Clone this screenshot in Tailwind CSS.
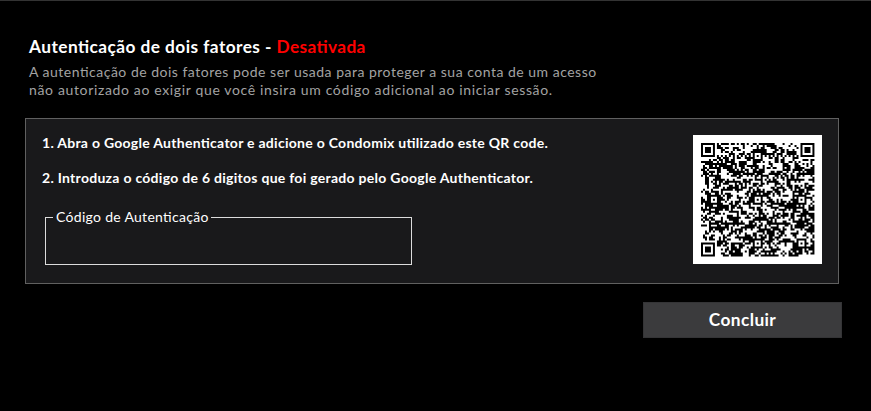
<!DOCTYPE html>
<html lang="pt">
<head>
<meta charset="utf-8">
<title>Autenticação de dois fatores</title>
<script src="https://cdn.jsdelivr.net/npm/@tailwindcss/browser@4"></script>
</head>
<body class="w-[871px] h-[411px] overflow-hidden bg-black border-t border-[#333333] pl-[25px] font-['Lato',sans-serif] text-white whitespace-nowrap [font-feature-settings:'liga'_1]">
<header class="pt-[35px] pl-[4px] h-[117px]">
<h1 class="text-[17.3px] leading-[22px] font-bold"><span class="tracking-[0.44px]">Autenticação de dois fatores - </span><span class="text-[#ff0000] tracking-[0.36px]">Desativada</span></h1>
<p class="mt-[5px] text-[14px] leading-[18px] text-[#a3a3a3]"><span class="tracking-[0.5px]">A autenticação de dois fatores pode ser usada para proteger a sua conta de um acesso</span><br><span class="tracking-[0.65px]">não autorizado ao exigir que você insira um código adicional ao iniciar sessão.</span></p>
</header>
<main class="w-[814px] h-[166px] bg-[#19191b] border border-[#606060] flex justify-between pl-[16px] pr-[16px] pt-[16px]">
<div>
<ol class="-mt-px text-[14px] leading-[17px] font-bold flex flex-col gap-[18px]">
<li class="tracking-[0.28px]">1. Abra o Google Authenticator e adicione o Condomix utilizado este QR code.</li>
<li class="tracking-[0.28px]">2. Introduza o código de 6 digitos que foi gerado pelo Google Authenticator.</li>
</ol>
<fieldset class="mt-[22px] ml-[3px] w-[367px] h-[57px] border border-[#dcdcdc] pl-[7px]">
<legend class="pl-[3px] pr-[2px] text-[14px] leading-[18px] tracking-[0.3px]">Código de Autenticação</legend>
<input aria-label="Código" class="w-[350px] h-[32px] bg-transparent outline-none">
</fieldset>
</div>
<svg class="w-[129px] h-[129px] bg-white" viewBox="0 0 129 129" role="img" aria-label="QR code"><path id="qr" transform="translate(8 8) scale(1.99)" fill="#000"/></svg>
</main>
<button class="mt-[18px] ml-[618px] w-[199px] h-[36px] bg-[#3b3b3d] border border-[#343436] flex items-center justify-center font-bold text-[17.3px] tracking-[0.4px]">Concluir</button>
<script>
const N = 57, centers = [6, 28, 50];
let seed = 73129, d = '';
const rnd = () => (seed = (seed * 1103515245 + 12345) % 2147483648) / 2147483648;
const grid = Array.from({ length: N }, () => Array(N).fill(false));
function moduleAt(x, y) {
  for (const [fx, fy] of [[0, 0], [N - 7, 0], [0, N - 7]]) {
    const r = Math.max(Math.abs(x - fx - 3), Math.abs(y - fy - 3));
    if (r <= 4) return r !== 2 && r !== 4;
  }
  for (const cx of centers) for (const cy of centers) {
    if ((cx === 6 && cy !== 28) || (cy === 6 && cx !== 28)) continue;
    const r = Math.max(Math.abs(x - cx), Math.abs(y - cy));
    if (r <= 2) return r !== 1;
  }
  if (x === 6) return y % 2 === 0;
  if (y === 6) return x % 2 === 0;
  const near = (x && grid[y][x - 1] ? 1 : 0) + (y && grid[y - 1][x] ? 1 : 0);
  return rnd() < [0.4, 0.53, 0.64][near];
}
for (let y = 0; y < N; y++) for (let x = 0; x < N; x++) grid[y][x] = moduleAt(x, y);
grid.forEach((row, y) => {
  for (let x = 0; x < N; x++) {
    if (!row[x]) continue;
    const start = x;
    while (row[x + 1]) x++;
    d += `M${start} ${y}h${x - start + 1}v1.02h-${x - start + 1}z`;
  }
});
document.getElementById('qr').setAttribute('d', d);
</script>
</body>
</html>
